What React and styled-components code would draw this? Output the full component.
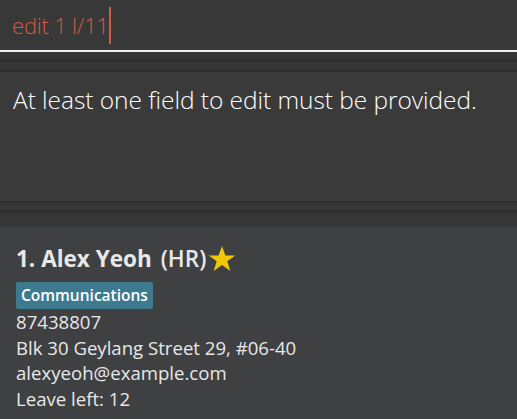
import React from "react";
import styled, { createGlobalStyle } from "styled-components";

const Global = createGlobalStyle`
  html, body { margin: 0; padding: 0; background: #383838; }
  body { width: 517px; height: 419px; overflow: hidden; }
`;

const Page = styled.div`
  display: flex;
  flex-direction: column;
  width: 517px;
  height: 419px;
  overflow: hidden;
  background: #383838;
`;

const CommandBox = styled.div`
  height: 50px;
  display: flex;
  align-items: center;
  padding-left: 12px;
  background: #383838;
  border-bottom: 2px solid #f2f2f2;
`;

const CommandText = styled.span`
  font-family: "Open Sans", sans-serif;
  font-weight: 300;
  font-size: 22px;
  color: #d05c45;
  letter-spacing: -0.2px;
`;

const Caret = styled.span`
  display: inline-block;
  width: 2px;
  height: 37px;
  background: #d05c45;
`;

const Band = styled.div`
  height: ${(p) => p.$h}px;
  background: #363636;
  display: flex;
  flex-direction: column;
`;

const DarkLine = styled.div`
  height: ${(p) => p.$h || 2}px;
  margin-top: ${(p) => p.$mt || 0}px;
  background: #2e2e2e;
`;

const ResultDisplay = styled.div`
  height: 129px;
  background: #3a3a3a;
  padding: 11px 13px 0;
  box-sizing: border-box;
  font-family: "Open Sans", sans-serif;
  font-weight: 300;
  font-size: 24.5px;
  letter-spacing: -0.05px;
  color: #ffffff;
`;

const ListArea = styled.div`
  flex: 1;
  background: #3f4042;
  padding: 14px 16px 0;
  font-family: "Open Sans", sans-serif;
  color: #e8e8e8;
`;

const NameRow = styled.div`
  display: flex;
  align-items: center;
  font-size: 22.5px;
  font-weight: 700;
  height: 35px;
`;

const Role = styled.span`
  font-weight: 600;
  margin-left: 9px;
`;

const Tag = styled.span`
  display: inline-block;
  background: #3d7a90;
  color: #ffffff;
  font-size: 15.5px;
  line-height: 21px;
  font-weight: 600;
  padding: 3px 5px 3px;
  border-radius: 2px;
  margin-top: 6px;
`;

const Field = styled.div`
  font-size: 18.6px;
  line-height: 25.5px;
`;

const Star = () => (
  <svg width="30" height="28" viewBox="0 0 24 23" style={{ marginLeft: 1 }}>
    <path
      d="M12 0.8l2.75 7.75h8.2l-6.6 4.9 2.5 7.9L12 16.5l-6.85 4.85 2.5-7.9-6.6-4.9h8.2z"
      fill="#f0c808"
    />
  </svg>
);

export default function App() {
  return (
    <Page>
      <Global />
      <CommandBox>
        <CommandText>edit 1 l/11</CommandText>
        <Caret />
      </CommandBox>
      <Band $h={20}>
        <DarkLine $mt={7} $h={3} />
        <DarkLine $mt={8} $h={2} />
      </Band>
      <ResultDisplay>At least one field to edit must be provided.</ResultDisplay>
      <Band $h={26}>
        <DarkLine $mt={0} $h={2} />
        <DarkLine $mt={7} $h={3} />
      </Band>
      <ListArea>
        <NameRow>
          1. Alex Yeoh <Role>(HR)</Role>
          <Star />
        </NameRow>
        <Tag>Communications</Tag>
        <Field>87438807</Field>
        <Field>Blk 30 Geylang Street 29, #06-40</Field>
        <Field>alexyeoh@example.com</Field>
        <Field>Leave left: 12</Field>
      </ListArea>
    </Page>
  );
}
